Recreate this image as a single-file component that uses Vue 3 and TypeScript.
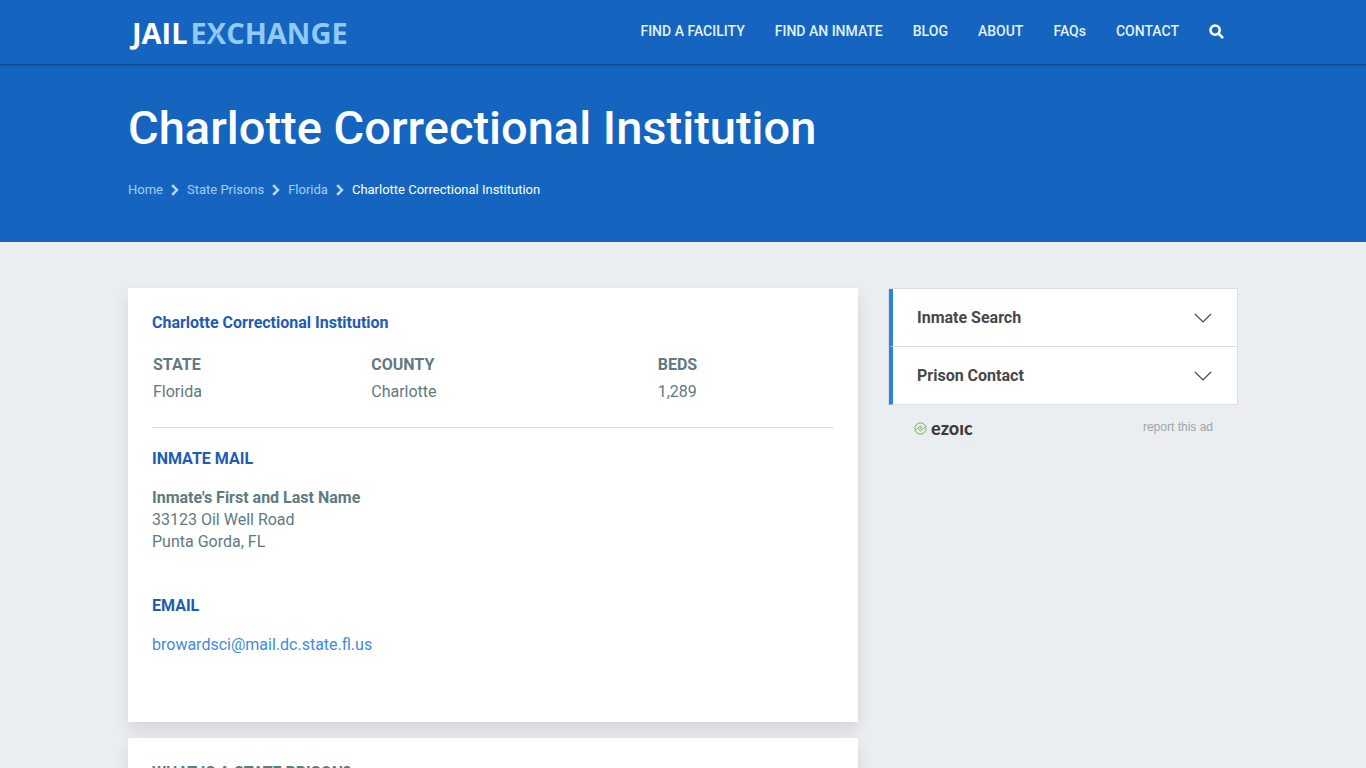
<script setup lang="ts">
interface NavItem {
  label: string
  href: string
}

const navItems: NavItem[] = [
  { label: 'FIND A FACILITY', href: '#facility' },
  { label: 'FIND AN INMATE', href: '#inmate' },
  { label: 'BLOG', href: '#blog' },
  { label: 'ABOUT', href: '#about' },
  { label: 'FAQs', href: '#faqs' },
  { label: 'CONTACT', href: '#contact' },
]

const crumbs: NavItem[] = [
  { label: 'Home', href: '#home' },
  { label: 'State Prisons', href: '#state-prisons' },
  { label: 'Florida', href: '#florida' },
]

const panels: string[] = ['Inmate Search', 'Prison Contact']
</script>

<template>
  <div class="page">
    <header class="topbar">
      <div class="container topbar-row">
        <a class="logo" href="#home"><span class="logo-jail">JAIL</span><span class="logo-exchange">E<span class="logo-x">X<svg viewBox="0 0 20 24" aria-hidden="true"><path d="M4 23 L10.5 12.5" /></svg></span>CHANGE</span></a>
        <nav class="nav" aria-label="Main">
          <a v-for="item in navItems" :key="item.label" :href="item.href">{{ item.label }}</a>
          <button class="search" type="button" aria-label="Search">
            <svg viewBox="0 0 16 16" aria-hidden="true">
              <circle cx="6.5" cy="6.5" r="4.9" />
              <path d="M10.4 10.4 L14.2 14.2" />
            </svg>
          </button>
        </nav>
      </div>
    </header>

    <section class="hero">
      <div class="container">
        <h1>Charlotte Correctional Institution</h1>
        <nav class="crumbs" aria-label="Breadcrumb">
          <template v-for="crumb in crumbs" :key="crumb.label">
            <a :href="crumb.href">{{ crumb.label }}</a>
            <svg viewBox="0 0 8 12" aria-hidden="true"><path d="M1.2 1.2 L6 6 L1.2 10.8" /></svg>
          </template>
          <span>Charlotte Correctional Institution</span>
        </nav>
      </div>
    </section>

    <div class="container content">
      <main class="main">
        <section class="card">
          <h2>Charlotte Correctional Institution</h2>
          <table class="facts">
            <thead>
              <tr>
                <th class="col-state" scope="col">STATE</th>
                <th class="col-county" scope="col">COUNTY</th>
                <th scope="col">BEDS</th>
              </tr>
            </thead>
            <tbody>
              <tr>
                <td>Florida</td>
                <td>Charlotte</td>
                <td>1,289</td>
              </tr>
            </tbody>
          </table>
          <hr />
          <h2>INMATE MAIL</h2>
          <address>
            <strong>Inmate's First and Last Name</strong><br />
            33123 Oil Well Road<br />
            Punta Gorda, FL
          </address>
          <h2>EMAIL</h2>
          <a class="email" href="mailto:browardsci@mail.dc.state.fl.us">browardsci@mail.dc.state.fl.us</a>
        </section>
        <section class="card">
          <h3>WHAT IS A STATE PRISON?</h3>
        </section>
      </main>

      <aside class="side">
        <div class="accordion">
          <button v-for="panel in panels" :key="panel" type="button" aria-expanded="false">
            <span>{{ panel }}</span>
            <svg viewBox="0 0 18 10" aria-hidden="true"><path d="M1 1 L9 9 L17 1" /></svg>
          </button>
        </div>
        <div class="ad-row">
          <a class="ezoic" href="#ezoic">
            <svg viewBox="0 0 13 13" aria-hidden="true">
              <circle cx="6.5" cy="6.5" r="5.6" />
              <path d="M2.2 7.6 L5.6 4.6 Q7 3.6 7.6 4.8 M10.8 5.4 L7.4 8.4 Q6 9.4 5.4 8.2 M4.8 7.6 L8.2 5.2" />
            </svg>
            <span>ezoıc</span>
          </a>
          <a class="report" href="#report">report this ad</a>
        </div>
      </aside>
    </div>
  </div>
</template>

<style>
body {
  margin: 0;
  background: #eaeef1;
}
</style>

<style scoped>
.page {
  font-family: Roboto, "Liberation Sans", sans-serif;
  font-size: 16px;
  line-height: 22px;
  color: #5f7a82;
}

a {
  text-decoration: none;
}

button {
  font: inherit;
  cursor: pointer;
}

.container {
  box-sizing: border-box;
  width: 100%;
  max-width: 1140px;
  margin: 0 auto;
  padding: 0 15px;
}

.topbar {
  position: relative;
  background: #1565c0;
  border-bottom: 1px solid #0d4a94;
  box-shadow: 0 1px 3px rgba(0, 0, 0, 0.2);
}

.topbar-row {
  display: flex;
  align-items: center;
  justify-content: space-between;
  height: 64px;
}

.logo {
  display: flex;
  gap: 3px;
  padding: 2px 0 0 4px;
  font-family: "Open Sans", "Noto Sans", sans-serif;
  font-size: 29px;
  font-weight: 700;
  line-height: 36px;
}

.logo-jail {
  color: #fff;
}

.logo-exchange {
  color: #90caf9;
}

.logo-x {
  position: relative;
}

.logo-x svg {
  position: absolute;
  top: 8px;
  left: 0;
  width: 20px;
  height: 24px;
  fill: none;
  stroke: #1565c0;
  stroke-width: 1;
}

.nav {
  display: flex;
  align-items: center;
  gap: 30px;
  padding: 0 14px 2px 0;
  font-size: 14px;
  font-weight: 500;
}

.nav a {
  color: #e3f2fd;
}

.search {
  display: flex;
  padding: 0;
  border: 0;
  background: none;
}

.search svg {
  width: 15px;
  height: 15px;
  fill: none;
  stroke: #fff;
  stroke-width: 2.8;
  stroke-linecap: round;
}

.hero {
  padding: 34px 0 42px;
  background: #1565c0;
}

h1 {
  margin: 0 0 23px;
  font-size: 47px;
  font-weight: 500;
  line-height: 58px;
  color: #fff;
}

.crumbs {
  display: flex;
  align-items: center;
  gap: 8px;
  font-size: 13px;
  line-height: 20px;
  color: #fff;
}

.crumbs a {
  color: #a3cdf5;
}

.crumbs svg {
  width: 8px;
  height: 12px;
  fill: none;
  stroke: #bbdefb;
  stroke-width: 2.4;
}

.content {
  display: grid;
  grid-template-columns: minmax(0, 730fr) minmax(0, 350fr);
  align-items: start;
  gap: 30px;
  padding-top: 46px;
}

.main {
  display: grid;
  gap: 16px;
}

.card {
  padding: 24px 24px 66px;
  background: #fff;
  box-shadow: 0 8px 16px rgba(0, 0, 0, 0.1);
}

h2,
h3 {
  margin: 0;
  font-size: 16px;
  font-weight: 700;
  line-height: 22px;
}

h2 {
  color: #1e5bb5;
}

.facts {
  width: 100%;
  margin-top: 18px;
  border-collapse: collapse;
}

.facts th,
.facts td {
  padding: 2px 1px 3px;
  text-align: left;
}

.facts th {
  font-weight: 700;
}

.col-state {
  width: 32%;
}

.col-county {
  width: 42%;
}

hr {
  margin: 21px 0 20px;
  border: 0;
  border-top: 1px solid #dcdfe1;
}

address {
  margin: 17px 0 42px;
  font-style: normal;
}

.email {
  display: block;
  margin-top: 17px;
  color: #3f8be0;
}

.accordion {
  border: 1px solid #dcdfe1;
  border-bottom: 0;
}

.accordion button {
  display: flex;
  align-items: center;
  justify-content: space-between;
  width: 100%;
  padding: 18px 25px 17px 24px;
  border: 0;
  border-left: 4px solid #2a86dc;
  border-bottom: 1px solid #dcdfe1;
  background: #fff;
  color: #484848;
  font-weight: 700;
}

.accordion svg {
  width: 18px;
  height: 10px;
  fill: none;
  stroke: #484848;
  stroke-width: 1.2;
}

.ad-row {
  display: flex;
  align-items: flex-start;
  justify-content: space-between;
  padding: 11px 25px 0 26px;
}

.ezoic {
  display: flex;
  align-items: center;
  gap: 4px;
  padding-top: 1px;
  color: #3c3c3c;
  font-family: Lato, sans-serif;
  font-size: 18px;
  font-weight: 900;
}

.ezoic svg {
  width: 13px;
  height: 13px;
  fill: none;
  stroke: #6ab344;
  stroke-width: 1;
}

.report {
  color: #a0a4a6;
  font-family: "Liberation Sans", sans-serif;
  font-size: 12px;
}
</style>
